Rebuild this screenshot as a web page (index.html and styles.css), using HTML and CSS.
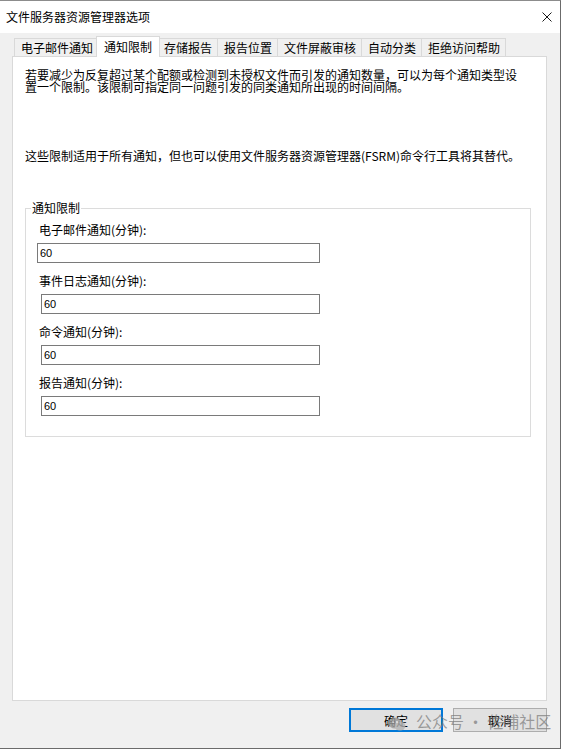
FILE: index.html
```html
<!DOCTYPE html>
<html>
<head>
    <meta charset="utf-8">
    <title>文件服务器资源管理器选项</title>
    <link rel="stylesheet" href="styles.css">
</head>

<body>
    <div class="window">
        <div class="titlebar">
            <span class="title">文件服务器资源管理器选项</span>
            <svg class="close-icon" width="10" height="10" viewBox="0 0 10 10">
                <path d="M0.5 0.5 L9.5 9.5 M9.5 0.5 L0.5 9.5" stroke="#1a1a1a" stroke-width="1" fill="none"/>
            </svg>
        </div>

        <div class="dialog-body">
            <div class="tabs">
                <div class="tab">电子邮件通知</div>
                <div class="tab active">通知限制</div>
                <div class="tab">存储报告</div>
                <div class="tab">报告位置</div>
                <div class="tab">文件屏蔽审核</div>
                <div class="tab">自动分类</div>
                <div class="tab">拒绝访问帮助</div>
            </div>

            <div class="panel">
                <p class="intro">若要减少为反复超过某个配额或检测到未授权文件而引发的通知数量，可以为每个通知类型设<br>置一个限制。该限制可指定同一问题引发的同类通知所出现的时间间隔。</p>
                <p class="note">这些限制适用于所有通知，但也可以使用文件服务器资源管理器(FSRM)命令行工具将其替代。</p>

                <fieldset class="group">
                    <legend>通知限制</legend>
                    <div class="fields">
                        <div class="field">
                            <label for="mail">电子邮件通知(分钟):</label>
                            <input type="text" id="mail" class="first" value="60">
                        </div>
                        <div class="field">
                            <label for="event">事件日志通知(分钟):</label>
                            <input type="text" id="event" value="60">
                        </div>
                        <div class="field">
                            <label for="command">命令通知(分钟):</label>
                            <input type="text" id="command" value="60">
                        </div>
                        <div class="field">
                            <label for="report">报告通知(分钟):</label>
                            <input type="text" id="report" value="60">
                        </div>
                    </div>
                </fieldset>
            </div>

            <div class="buttons">
                <button class="btn default">确定</button>
                <button class="btn">取消</button>
            </div>
        </div>

        <div class="watermark">
            <svg class="wm-icon" width="18" height="14" viewBox="0 0 18 14">
                <ellipse cx="7" cy="6" rx="6.5" ry="5.5" fill="#9a9a9a"/>
                <ellipse cx="12" cy="9" rx="5.5" ry="4.5" fill="#b4b4b4"/>
                <circle cx="5" cy="5" r="0.9" fill="#eee"/>
                <circle cx="9" cy="5" r="0.9" fill="#eee"/>
            </svg>
            <span>公众号 · 佐哺社区</span>
        </div>
    </div>
</body>
</html>
```

FILE: styles.css
```css
body {
    margin: 0;
    background: #ffffff;
    font-family: "Noto Sans CJK SC", "Noto Sans", sans-serif;
    font-size: 12px;
    color: #000000;
}

.window {
    position: relative;
    width: 560px;
    height: 747px;
    border-top: 1px solid #8c8c8c;
    border-right: 1px solid #6b6b6b;
    border-bottom: 1px solid #6b6b6b;
    background: #f0f0f0;
    display: flex;
    flex-direction: column;
}

.titlebar {
    height: 32px;
    background: #ffffff;
    display: flex;
    align-items: center;
    justify-content: space-between;
    padding: 0 8px 0 6px;
}

.title {
    font-size: 12px;
    line-height: 14px;
}

.close-icon {
    display: block;
}

.dialog-body {
    flex: 1;
    display: flex;
    flex-direction: column;
    padding: 3px 13px 0 12px;
}

.tabs {
    display: flex;
    align-items: flex-end;
    height: 20px;
    padding-left: 2px;
}

.tab {
    height: 18px;
    box-sizing: border-box;
    padding: 0 5px 0 6px;
    border: 1px solid #d9d9d9;
    border-bottom: none;
    margin-left: -1px;
    background: #f0f0f0;
    line-height: 17px;
    white-space: nowrap;
}

.tab:first-child {
    margin-left: 0;
}

.tab.active {
    position: relative;
    z-index: 1;
    height: 21px;
    margin: 0 -2px -1px -3px;
    padding: 0 7px;
    background: #ffffff;
    line-height: 19px;
}

.panel {
    height: 645px;
    box-sizing: border-box;
    background: #ffffff;
    border: 1px solid #d9d9d9;
    padding: 12px 15px 0 12px;
}

.intro,
.note {
    margin: 0;
    line-height: 12px;
    white-space: nowrap;
}

.note {
    margin-top: 57px;
}

.group {
    margin: 39px 0 0 0;
    padding: 8px 0 20px 0;
    border: 1px solid #dcdcdc;
}

.group legend {
    margin-left: 5px;
    padding: 0 1px;
    line-height: 14px;
}

.fields {
    padding-left: 13px;
}

.field {
    display: flex;
    flex-direction: column;
    align-items: flex-start;
    margin-bottom: 11px;
}

.field:last-child {
    margin-bottom: 0;
}

.field label {
    line-height: 14px;
    margin-bottom: 6px;
}

.field input {
    width: 279px;
    height: 20px;
    box-sizing: border-box;
    margin: 0 0 0 2px;
    padding: 0 2px;
    border: 1px solid #7a7a7a;
    font-family: "Liberation Sans", Arial, sans-serif;
    font-size: 11px;
    color: #000000;
    outline: none;
}

.field input.first {
    width: 283px;
    margin-left: -2px;
}

.buttons {
    display: flex;
    justify-content: flex-end;
    gap: 10px;
    margin-top: 7px;
}

.btn {
    width: 94px;
    height: 24px;
    box-sizing: border-box;
    background: #e1e1e1;
    border: 1px solid #adadad;
    font-family: "Noto Sans CJK SC", sans-serif;
    font-size: 12px;
    color: #000000;
    padding: 0;
}

.btn.default {
    border: 2px solid #0078d7;
}

.watermark {
    position: absolute;
    left: 388px;
    top: 710px;
    display: flex;
    align-items: center;
    gap: 10px;
    color: rgba(120, 120, 120, 0.7);
    font-size: 16px;
    line-height: 20px;
    pointer-events: none;
}

.wm-icon {
    margin-top: 6px;
    opacity: 0.8;
}
```
